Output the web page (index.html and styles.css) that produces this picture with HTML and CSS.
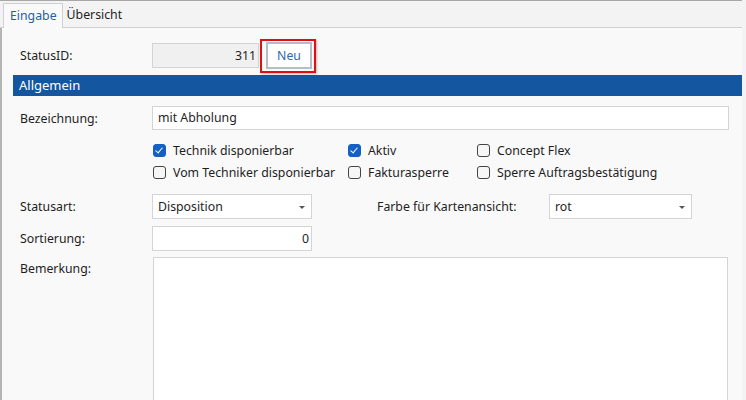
FILE: index.html
```html
<!DOCTYPE html>
<html lang="de">
<head>
  <meta charset="UTF-8">
  <title>Status bearbeiten</title>
  <link rel="stylesheet" href="styles.css">
</head>
<body>
  <div class="window">
    <div class="tabs">
      <div class="tab active">Eingabe</div>
      <div class="tab">Übersicht</div>
    </div>

    <div class="panel">
      <!-- Status ID -->
      <div class="row status-row">
        <span class="label">StatusID:</span>
        <div class="field readonly num">311</div>
        <div class="highlight"><button class="btn">Neu</button></div>
      </div>

      <div class="group-header">Allgemein</div>

      <div class="row name-row">
        <span class="label">Bezeichnung:</span>
        <div class="field wide">mit Abholung</div>
      </div>

      <div class="checks">
        <label class="check"><span class="box checked"></span>Technik disponierbar</label>
        <label class="check"><span class="box checked"></span>Aktiv</label>
        <label class="check"><span class="box"></span>Concept Flex</label>
        <label class="check"><span class="box"></span>Vom Techniker disponierbar</label>
        <label class="check"><span class="box"></span>Fakturasperre</label>
        <label class="check"><span class="box"></span>Sperre Auftragsbestätigung</label>
      </div>

      <div class="row combo-row">
        <span class="label">Statusart:</span>
        <div class="field combo short">Disposition<span class="arrow"></span></div>
        <span class="label color-label">Farbe für Kartenansicht:</span>
        <div class="field combo color-combo">rot<span class="arrow"></span></div>
      </div>

      <div class="row sort-row">
        <span class="label">Sortierung:</span>
        <div class="field num short">0</div>
      </div>

      <div class="row memo-row">
        <span class="label">Bemerkung:</span>
        <div class="memo"></div>
      </div>
    </div>
  </div>
</body>
</html>
```

FILE: styles.css
```css
/* Global */
body {
  margin: 0;
  font-family: 'Noto Sans', 'Open Sans', sans-serif;
  font-size: 12.3px;
  color: #1e1e1e;
  background: #f3f3f3;
}

.window {
  width: 742px;
  height: 400px;
  overflow: hidden;
  border-top: 1px solid #a8a8a8;
  box-sizing: border-box;
}

/* Tabs */
.tabs {
  display: flex;
  height: 24px;
  padding: 2px 0 0 3px;
  background: #f3f3f3;
  border-bottom: 1px solid #d0d0d0;
}

.tab {
  padding: 0 4px;
  line-height: 23px;
  margin-bottom: -1px;
}

.tab.active {
  background: #f9f9f9;
  color: #2a5d9c;
  border: 1px solid #d0d0d0;
  border-bottom: none;
  padding: 0 5px 0 6px;
}

/* Panel */
.panel {
  background: #f9f9f9;
  border-left: 2px solid #b4b4b4;
  height: 380px;
  padding-left: 11px;
}

.row {
  display: flex;
  align-items: center;
}

.label {
  width: 132px;
  padding-left: 7px;
  flex: none;
}

.field {
  flex: none;
  box-sizing: border-box;
  height: 25px;
  line-height: 23px;
  border: 1px solid #d4d4d4;
  background: #fff;
  padding: 0 5px;
  position: relative;
}

.field.short { width: 160px; }
.field.wide { width: 577px; height: 24px; line-height: 22px; }
.field.readonly {
  background: #f0f0f0;
  width: 107px;
}
.field.num { text-align: right; padding-right: 2px; }

.status-row {
  padding-top: 15px;
  height: 25px;
}

.highlight {
  margin-left: 1px;
  border: 2px solid #e01010;
  padding: 1px 2px 2px 4px;
  box-shadow: 1px 1px 2px rgba(0, 0, 0, 0.25);
}

.btn {
  font-family: inherit;
  font-size: 12.3px;
  color: #2f67b0;
  background: #fff;
  border: 2px solid #b8bcc4;
  height: 27px;
  width: 46px;
  padding: 0;
}

.group-header {
  margin-top: 7px;
  height: 21px;
  line-height: 20px;
  background: #1457a0;
  color: #fff;
  font-size: 13px;
  padding-left: 6px;
}

.name-row { margin-top: 10px; }

/* Checkboxes */
.checks {
  display: grid;
  grid-template-columns: 195px 129px auto;
  grid-auto-rows: 22px;
  margin: 9px 0 0 140px;
}

.check {
  display: flex;
  align-items: center;
}

.box {
  width: 11px;
  height: 11px;
  border: 1px solid #444;
  border-radius: 3px;
  background: #f6f6f6;
  margin-right: 7px;
  position: relative;
}

.box.checked {
  background: #1361c4;
  border-color: #1361c4;
}

.box.checked::after {
  content: '';
  position: absolute;
  left: 3px;
  top: 1px;
  width: 3px;
  height: 6px;
  border: solid #fff;
  border-width: 0 1px 1px 0;
  transform: rotate(40deg);
}

/* Combos */
.combo-row { margin-top: 11px; }

.arrow {
  position: absolute;
  right: 6px;
  top: 11px;
  border-left: 3px solid transparent;
  border-right: 3px solid transparent;
  border-top: 3px solid #555;
}

.color-label {
  margin-left: 58px;
  width: 172px;
}

.color-combo { width: 143px; }

.sort-row { margin-top: 7px; }

.memo-row {
  margin-top: 6px;
  align-items: flex-start;
}

.memo-row .label { padding-top: 3px; }

.memo {
  width: 573px;
  height: 200px;
  margin-left: 1px;
  border: 1px solid #d4d4d4;
  background: #fff;
}
```
